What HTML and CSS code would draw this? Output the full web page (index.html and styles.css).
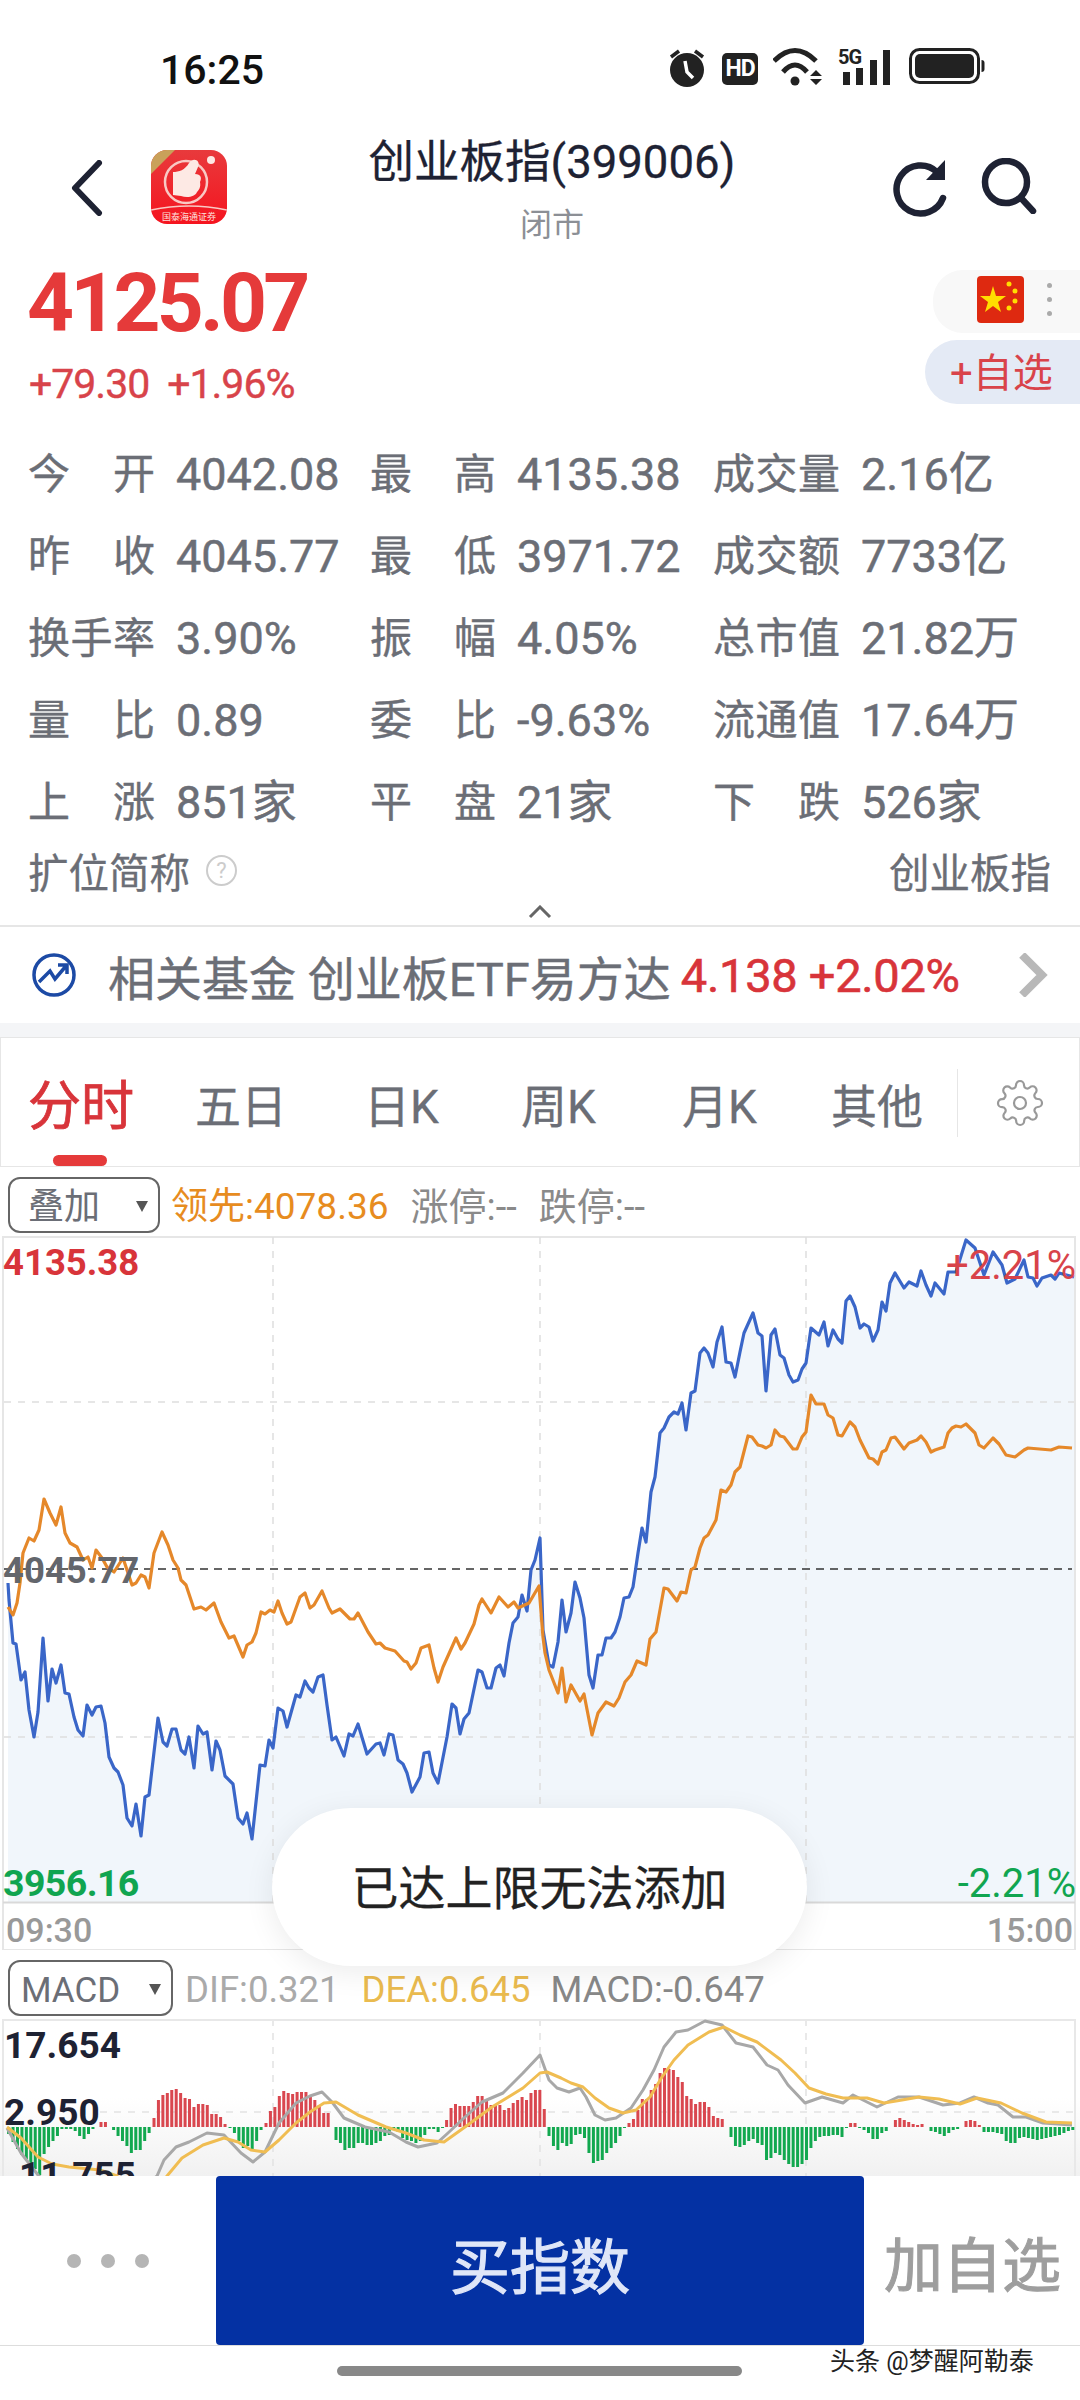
FILE: index.html
```html
<!doctype html>
<html lang="zh-CN">
  <head>
    <meta charset="UTF-8" />
    <meta name="viewport" content="width=device-width, initial-scale=1" />
    <title>创业板指(399006)</title>
    <link rel="stylesheet" href="styles.css">
  </head>
  <body>
    <div class="c-page">
      <div class="c-status">
        <span class="c-status__time">16:25</span>
        <div class="c-status__icons">
          <svg width="38" height="40" viewBox="0 0 38 40"><circle cx="18" cy="22" r="17" fill="#222"/><path d="M16 13 L18 24 L24 30" fill="none" stroke="#fff" stroke-width="3.5"/><path d="M2 9 L10 3 M34 9 L26 3" stroke="#222" stroke-width="3.5"/></svg>
          <span class="c-status__hd">HD</span>
          <svg width="50" height="38" viewBox="0 0 50 38"><g fill="none" stroke="#222" stroke-width="5"><path d="M1 13 Q22 -8 43 13"/><path d="M10 24 Q22 10 34 24"/></g><circle cx="22" cy="33" r="4.500" fill="#222"/><path d="M43 22 L49 28 H37Z M37 31 H49 L43 37Z" fill="#222"/></svg>
          <div class="c-status__signal">
            <span class="c-status__5g">5G</span>
            <svg width="54" height="38" viewBox="0 0 54 38"><path d="M6 24H13V37H6Z M19 20H26V37H19Z M33 12H40V37H33Z M46 2H53V37H46Z" fill="#222"/></svg>
          </div>
          <svg width="76" height="36" viewBox="0 0 76 36"><rect x="1.5" y="1.5" width="68" height="33" rx="9" fill="none" stroke="#222" stroke-width="3"/><rect x="6" y="6" width="59" height="24" rx="5" fill="#222"/><path d="M72.500 12 a3 3 0 0 1 3 3 v6 a3 3 0 0 1 -3 3z" fill="#222"/></svg>
        </div>
      </div>

      <header class="c-header">
        <svg class="c-header__back" width="34" height="56" viewBox="0 0 34 56"><path d="M29 3 L5 28 L29 53" fill="none" stroke="#1e2233" stroke-width="6" stroke-linecap="round" stroke-linejoin="round"/></svg>
        <svg class="c-header__app" width="76" height="74" viewBox="0 0 76 74">
          <defs>
            <linearGradient id="appRed" x1="0" y1="0" x2="0" y2="1"><stop offset="0" stop-color="#e83a3c"/><stop offset="1" stop-color="#f5141f"/></linearGradient>
            <clipPath id="appClip"><rect width="76" height="74" rx="16"/></clipPath>
          </defs>
          <g clip-path="url(#appClip)">
            <rect width="76" height="74" fill="url(#appRed)"/>
            <path d="M0 0 H24 L0 24Z" fill="#c9a15a"/>
            <circle cx="35" cy="32" r="21" fill="none" stroke="#f9c9c4" stroke-width="2.500"/>
            <path d="M22 22 C28 22 34 20 38 13 C42 7 50 10 47 17 L44 24 C50 24 51 28 49 32 C50 37 48 40 46 42 C44 47 36 48 30 46 L22 45Z" fill="#fde9e4"/>
            <circle cx="60" cy="10" r="4" fill="#fde9e4"/>
            <path d="M0 60 Q38 52 76 60" fill="none" stroke="#f9c9c4" stroke-width="1.500"/>
            <text x="38" y="70" text-anchor="middle" font-size="9" fill="#fde0dc" font-family="'Noto Sans CJK SC'">国泰海通证券</text>
          </g>
        </svg>
        <div class="c-header__title">
          <h1>创业板指(399006)</h1>
          <p>闭市</p>
        </div>
        <div class="c-header__tools">
          <svg width="58" height="60" viewBox="0 0 58 60"><path d="M46 14 A24 24 0 1 0 52 40" fill="none" stroke="#1e2233" stroke-width="6.500" stroke-linecap="round"/><path d="M54 2 V22 H35Z" fill="#1e2233"/></svg>
          <svg width="58" height="56" viewBox="0 0 58 56"><circle cx="27" cy="24" r="21" fill="none" stroke="#1e2233" stroke-width="6.500"/><path d="M42 40 L54 53" stroke="#1e2233" stroke-width="6.500" stroke-linecap="round"/></svg>
        </div>
      </header>

      <section class="c-quote">
        <div class="c-quote__price">
          <div class="c-quote__last">4125.07</div>
          <div class="c-quote__change"><span>+79.30</span><span>+1.96%</span></div>
        </div>
        <div class="c-quote__side">
          <div class="c-quote__region">
            <svg width="47" height="47" viewBox="0 0 47 47"><rect width="47" height="47" rx="4" fill="#de2910"/><path d="M16 10 L19 20 L29 20 L21 26 L24 36 L16 30 L8 36 L11 26 L3 20 L13 20Z" fill="#ffde00"/><circle cx="32" cy="8" r="2.500" fill="#ffde00"/><circle cx="38" cy="15" r="2.500" fill="#ffde00"/><circle cx="38" cy="25" r="2.500" fill="#ffde00"/><circle cx="32" cy="32" r="2.500" fill="#ffde00"/></svg>
            <div class="c-quote__dots"><i></i><i></i><i></i></div>
          </div>
          <div class="c-quote__add">+自选</div>
        </div>
      </section>

      <section class="c-stats">
        <span class="c-stats__k">今开</span><span class="c-stats__v">4042.08</span>
        <span class="c-stats__k">最高</span><span class="c-stats__v">4135.38</span>
        <span class="c-stats__k">成交量</span><span class="c-stats__v">2.16亿</span>
        <span class="c-stats__k">昨收</span><span class="c-stats__v">4045.77</span>
        <span class="c-stats__k">最低</span><span class="c-stats__v">3971.72</span>
        <span class="c-stats__k">成交额</span><span class="c-stats__v">7733亿</span>
        <span class="c-stats__k">换手率</span><span class="c-stats__v">3.90%</span>
        <span class="c-stats__k">振幅</span><span class="c-stats__v">4.05%</span>
        <span class="c-stats__k">总市值</span><span class="c-stats__v">21.82万</span>
        <span class="c-stats__k">量比</span><span class="c-stats__v">0.89</span>
        <span class="c-stats__k">委比</span><span class="c-stats__v">-9.63%</span>
        <span class="c-stats__k">流通值</span><span class="c-stats__v">17.64万</span>
        <span class="c-stats__k">上涨</span><span class="c-stats__v">851家</span>
        <span class="c-stats__k">平盘</span><span class="c-stats__v">21家</span>
        <span class="c-stats__k">下跌</span><span class="c-stats__v">526家</span>
      </section>

      <div class="c-alias">
        <div class="c-alias__name">扩位简称<span class="c-alias__help">?</span></div>
        <div>创业板指</div>
      </div>
      <div class="c-fold">
        <svg width="24" height="14" viewBox="0 0 24 14"><path d="M2 12 L12 2 L22 12" fill="none" stroke="#666" stroke-width="3"/></svg>
      </div>

      <a class="c-fund">
        <svg width="48" height="46" viewBox="0 0 48 46"><circle cx="24" cy="23" r="20" fill="none" stroke="#1c4aa5" stroke-width="3.500"/><path d="M9 30 L20 19 L25 27 L36 14 M28 13 H37 V22" fill="none" stroke="#1c4aa5" stroke-width="3.500"/></svg>
        <span class="c-fund__name">相关基金 创业板ETF易方达</span>
        <span class="c-fund__val">4.138 +2.02%</span>
        <svg class="c-fund__more" width="30" height="44" viewBox="0 0 30 44"><path d="M4 2 L24 22 L4 42" fill="none" stroke="#b8b8b8" stroke-width="8"/></svg>
      </a>
      <div class="c-band"></div>

      <nav class="c-tabs">
        <span class="c-tabs__item is-active">分时</span>
        <span class="c-tabs__item">五日</span>
        <span class="c-tabs__item">日K</span>
        <span class="c-tabs__item">周K</span>
        <span class="c-tabs__item">月K</span>
        <span class="c-tabs__item">其他</span>
        <span class="c-tabs__gear">
          <svg width="48" height="48" viewBox="0 0 24 24" fill="none" stroke="#999" stroke-width="1.100"><circle cx="12" cy="12" r="3"/><path d="M19.400 15a1.650 1.650 0 0 0 .33 1.820l.06.06a2 2 0 0 1 0 2.830 2 2 0 0 1-2.830 0l-.06-.06a1.650 1.650 0 0 0-1.820-.33 1.650 1.650 0 0 0-1 1.510V21a2 2 0 0 1-2 2 2 2 0 0 1-2-2v-.09A1.650 1.650 0 0 0 9 19.400a1.650 1.650 0 0 0-1.820.33l-.06.06a2 2 0 0 1-2.830 0 2 2 0 0 1 0-2.830l.06-.06a1.650 1.650 0 0 0 .33-1.820 1.650 1.650 0 0 0-1.510-1H3a2 2 0 0 1-2-2 2 2 0 0 1 2-2h.09A1.650 1.650 0 0 0 4.600 9a1.650 1.650 0 0 0-.33-1.820l-.06-.06a2 2 0 0 1 0-2.830 2 2 0 0 1 2.830 0l.06.06a1.650 1.650 0 0 0 1.820.33H9a1.650 1.650 0 0 0 1-1.510V3a2 2 0 0 1 2-2 2 2 0 0 1 2 2v.09a1.650 1.650 0 0 0 1 1.510 1.650 1.650 0 0 0 1.820-.33l.06-.06a2 2 0 0 1 2.830 0 2 2 0 0 1 0 2.830l-.06.06a1.650 1.650 0 0 0-.33 1.820V9a1.650 1.650 0 0 0 1.510 1H21a2 2 0 0 1 2 2 2 2 0 0 1-2 2h-.09a1.650 1.650 0 0 0-1.510 1z"/></svg>
        </span>
      </nav>

      <div class="c-legend">
        <div class="c-select c-select--overlay">叠加<i></i></div>
        <span class="c-legend__lead">领先:4078.36</span>
        <span class="c-legend__mute">涨停:--</span>
        <span class="c-legend__mute">跌停:--</span>
      </div>

      <div class="c-chart">
        <svg class="c-chart__svg" width="1080" height="714" viewBox="0 1236 1080 714">
          <path d="M8 1902 L8 1583 9 1600 13 1643 16 1644 21 1680 25 1672 29 1710 34 1737 38 1712 43 1638 48 1701 52 1669 56 1683 61 1665 65 1693 69 1694 74 1717 78 1730 83 1736 87 1705 92 1715 96 1707 101 1706 105 1723 109 1757 114 1768 118 1772 123 1785 127 1818 132 1826 136 1804 141 1836 145 1797 149 1795 158 1718 163 1742 167 1746 172 1729 176 1729 181 1750 185 1754 189 1737 194 1768 198 1726 203 1734 207 1732 212 1770 216 1741 220 1750 225 1776 233 1784 238 1818 243 1824 247 1813 252 1839 260 1765 265 1766 269 1740 273 1748 278 1708 283 1711 287 1727 296 1695 300 1697 305 1681 309 1688 313 1692 318 1677 323 1675 327 1705 332 1740 336 1737 344 1756 349 1734 353 1736 358 1724 367 1754 376 1744 380 1743 384 1755 389 1734 393 1735 398 1760 403 1764 407 1773 412 1792 420 1777 424 1753 429 1752 433 1773 438 1783 447 1737 452 1704 456 1708 460 1734 464 1719 469 1713 478 1670 482 1672 487 1688 491 1688 496 1668 500 1665 504 1676 509 1643 513 1623 518 1617 522 1595 527 1611 531 1570 535 1560 540 1538 543 1630 549 1665 553 1667 558 1642 562 1600 566 1632 571 1613 575 1582 580 1598 584 1618 589 1675 593 1688 598 1655 602 1655 606 1638 611 1638 615 1632 620 1617 624 1598 629 1597 633 1587 638 1553 642 1528 646 1542 651 1492 655 1477 660 1433 664 1428 669 1417 674 1412 678 1414 682 1403 686 1430 691 1393 695 1391 700 1353 704 1348 708 1353 713 1367 717 1342 722 1327 726 1362 731 1363 735 1377 740 1352 744 1333 753 1313 758 1333 762 1336 766 1391 771 1335 775 1329 780 1355 784 1358 789 1375 793 1382 798 1380 802 1369 806 1363 811 1328 819 1335 824 1322 828 1346 833 1330 838 1339 842 1343 846 1301 850 1296 855 1307 860 1328 864 1324 869 1327 873 1341 878 1330 882 1302 886 1311 890 1283 895 1273 904 1288 909 1282 917 1286 921 1271 926 1285 931 1296 935 1283 944 1294 948 1272 956 1272 966 1240 975 1248 984 1275 993 1252 1002 1265 1007 1283 1015 1279 1024 1260 1028 1277 1033 1278 1037 1286 1042 1278 1051 1275 1055 1279 1059 1273 1074 1277 L1074 1902Z" fill="#f1f6fb"/>
          <path d="M3 1950 V1237 H1075 V1950 H3Z" fill="none" stroke="#e6e6e6" stroke-width="2"/>
          <path d="M3 1902.500 H1075" stroke="#d9d9d9" stroke-width="2"/>
          <path d="M273 1237 V1902 M540 1237 V1902 M806 1237 V1902 M4 1402 H1074 M4 1737 H1074" stroke="#dedede" stroke-width="1.500" stroke-dasharray="7 7"/>
          <path d="M4 1569 H1072" stroke="#333" stroke-width="1.500" stroke-dasharray="8 6"/>
          <polyline points="8,1583 9,1600 13,1643 16,1644 21,1680 25,1672 29,1710 34,1737 38,1712 43,1638 48,1701 52,1669 56,1683 61,1665 65,1693 69,1694 74,1717 78,1730 83,1736 87,1705 92,1715 96,1707 101,1706 105,1723 109,1757 114,1768 118,1772 123,1785 127,1818 132,1826 136,1804 141,1836 145,1797 149,1795 158,1718 163,1742 167,1746 172,1729 176,1729 181,1750 185,1754 189,1737 194,1768 198,1726 203,1734 207,1732 212,1770 216,1741 220,1750 225,1776 233,1784 238,1818 243,1824 247,1813 252,1839 260,1765 265,1766 269,1740 273,1748 278,1708 283,1711 287,1727 296,1695 300,1697 305,1681 309,1688 313,1692 318,1677 323,1675 327,1705 332,1740 336,1737 344,1756 349,1734 353,1736 358,1724 367,1754 376,1744 380,1743 384,1755 389,1734 393,1735 398,1760 403,1764 407,1773 412,1792 420,1777 424,1753 429,1752 433,1773 438,1783 447,1737 452,1704 456,1708 460,1734 464,1719 469,1713 478,1670 482,1672 487,1688 491,1688 496,1668 500,1665 504,1676 509,1643 513,1623 518,1617 522,1595 527,1611 531,1570 535,1560 540,1538 543,1630 549,1665 553,1667 558,1642 562,1600 566,1632 571,1613 575,1582 580,1598 584,1618 589,1675 593,1688 598,1655 602,1655 606,1638 611,1638 615,1632 620,1617 624,1598 629,1597 633,1587 638,1553 642,1528 646,1542 651,1492 655,1477 660,1433 664,1428 669,1417 674,1412 678,1414 682,1403 686,1430 691,1393 695,1391 700,1353 704,1348 708,1353 713,1367 717,1342 722,1327 726,1362 731,1363 735,1377 740,1352 744,1333 753,1313 758,1333 762,1336 766,1391 771,1335 775,1329 780,1355 784,1358 789,1375 793,1382 798,1380 802,1369 806,1363 811,1328 819,1335 824,1322 828,1346 833,1330 838,1339 842,1343 846,1301 850,1296 855,1307 860,1328 864,1324 869,1327 873,1341 878,1330 882,1302 886,1311 890,1283 895,1273 904,1288 909,1282 917,1286 921,1271 926,1285 931,1296 935,1283 944,1294 948,1272 956,1272 966,1240 975,1248 984,1275 993,1252 1002,1265 1007,1283 1015,1279 1024,1260 1028,1277 1033,1278 1037,1286 1042,1278 1051,1275 1055,1279 1059,1273 1074,1277" fill="none" stroke="#3a66c8" stroke-width="3.200" stroke-linejoin="round"/>
          <polyline points="8,1607 13,1615 17,1603 20,1583 23,1553 29,1538 34,1541 39,1530 44,1499 50,1513 56,1525 61,1507 65,1533 70,1543 77,1547 83,1560 88,1557 92,1568 96,1550 102,1558 107,1567 114,1572 123,1558 128,1573 132,1585 136,1583 141,1575 145,1577 149,1588 154,1553 162,1532 168,1545 173,1560 178,1568 181,1580 186,1585 194,1609 201,1607 206,1610 214,1603 221,1622 229,1638 234,1636 243,1657 247,1645 252,1642 256,1633 261,1612 265,1614 270,1610 274,1612 278,1601 282,1613 287,1624 291,1622 300,1597 305,1593 310,1608 314,1605 322,1591 329,1608 332,1613 340,1609 350,1619 354,1619 358,1613 368,1632 376,1644 380,1643 385,1648 395,1651 404,1661 407,1662 411,1669 416,1663 421,1648 429,1645 434,1668 438,1682 443,1667 456,1638 461,1649 465,1643 474,1624 479,1605 482,1599 491,1613 499,1597 508,1607 514,1602 518,1608 529,1603 539,1586 543,1637 545,1653 549,1670 558,1693 562,1668 566,1702 571,1685 580,1701 584,1694 592,1735 598,1713 606,1702 614,1706 619,1698 625,1682 631,1675 637,1661 646,1665 650,1639 656,1632 660,1610 664,1588 668,1589 677,1601 681,1592 686,1593 691,1570 695,1567 700,1548 704,1538 708,1535 716,1520 721,1490 726,1492 731,1485 735,1472 740,1467 748,1436 752,1437 758,1445 762,1446 766,1448 771,1445 775,1430 780,1436 784,1437 793,1449 797,1449 802,1437 806,1432 811,1395 816,1404 824,1404 828,1415 833,1418 838,1435 842,1436 850,1422 855,1427 860,1440 869,1458 873,1459 878,1464 882,1452 886,1450 891,1438 895,1437 904,1449 909,1443 917,1440 921,1436 926,1442 931,1452 935,1450 944,1447 948,1433 952,1428 956,1426 961,1427 966,1424 975,1433 979,1445 984,1448 993,1438 999,1444 1006,1455 1015,1457 1024,1450 1028,1448 1051,1450 1059,1447 1072,1448" fill="none" stroke="#e5882a" stroke-width="3.200" stroke-linejoin="round"/>
        </svg>
        <span class="c-chart__label c-chart__label--high">4135.38</span>
        <span class="c-chart__label c-chart__label--prev">4045.77</span>
        <span class="c-chart__label c-chart__label--low">3956.16</span>
        <span class="c-chart__label c-chart__label--up">+2.21%</span>
        <span class="c-chart__label c-chart__label--down">-2.21%</span>
        <span class="c-chart__label c-chart__label--start">09:30</span>
        <span class="c-chart__label c-chart__label--end">15:00</span>
      </div>

      <div class="c-legend c-legend--macd">
        <div class="c-select c-select--macd">MACD<i></i></div>
        <span class="c-legend__dif">DIF:0.321</span>
        <span class="c-legend__dea">DEA:0.645</span>
        <span class="c-legend__macd">MACD:-0.647</span>
      </div>

      <div class="c-macd">
        <svg class="c-chart__svg" width="1080" height="157" viewBox="0 2019 1080 157">
          <path d="M273 2019 V2176 M540 2019 V2176 M806 2019 V2176 M100 2112 H1074" stroke="#e2e2e2" stroke-width="1.500" stroke-dasharray="7 7"/>
          <path d="M3 2176 V2020 H1075 V2176" fill="none" stroke="#e8e8e8" stroke-width="2"/>
          <path fill="none" stroke="#12a84f" stroke-width="3" d="
            M8.600 2127 v7m4.440-7v15m4.440-15v22m4.440-22v28m4.440-28v32m4.440-32v37m4.440-37v42m4.440-42v48m4.440-48v27m4.440-27v20m4.440-20v14m4.440-14v9m4.440-9v2m4.440-2v2m4.440-2v2m4.440-2v4m4.440-4v9m4.440-9v12m4.440-12v7m4.440-7v2
            M113.600 2127 v3m4.440-3v9m4.440-9v14m4.440-14v19m4.440-19v26m4.440-26v23m4.440-23v23m4.440-23v14m4.440-14v6
            M230 2127 v1m4.440-1v6m4.440-6v14m4.440-14v21m4.440-21v19m4.440-19v23m4.440-23v14m4.440-14v3
            M336 2127 v13m4.440-13v16m4.440-16v23m4.440-23v21m4.440-21v21m4.440-21v16m4.440-16v16m4.440-16v18m4.440-18v18m4.440-18v16m4.440-16v14m4.440-14v9m4.440-9v8m4.440-8v3m4.440-3v5m4.440-5v11m4.440-11v13m4.440-13v14m4.440-14v16m4.440-16v14m4.440-14v8m4.440-8v2m4.440-2v2m4.440-2v5m4.440-5v1
            M549 2127 v9m4.440-9v19m4.440-19v23m4.440-23v16m4.440-16v19m4.440-19v17m4.440-17v8m4.440-8v7m4.440-7v11m4.440-11v26m4.440-26v36m4.440-36v34m4.440-34v33m4.440-33v26m4.440-26v21m4.440-21v16m4.440-16v9m4.440-9v1
            M731 2127 v10m4.440-10v19m4.440-19v20m4.440-20v18m4.440-18v14m4.440-14v12m4.440-12v16m4.440-16v18m4.440-18v33m4.440-33v31m4.440-31v26m4.440-26v28m4.440-28v33m4.440-33v37m4.440-37v40m4.440-40v40m4.440-40v37m4.440-37v33m4.440-33v21m4.440-21v14m4.440-14v10m4.440-10v9m4.440-9v9m4.440-9v8m4.440-8v8m4.440-8v10m4.440-10v1
            M859.600 2127 v1m4.440-1v3m4.440-3v6m4.440-6v12m4.440-12v12m4.440-12v6m4.440-6v4
            M931 2127 v4m4.440-4v5m4.440-5v7m4.440-7v9m4.440-9v6m4.440-6v3m4.440-3v2
            M984 2127 v5m4.440-5v5m4.440-5v5m4.440-5v6m4.440-6v7m4.440-7v14m4.440-14v16m4.440-16v16m4.440-16v11m4.440-11v10m4.440-10v11m4.440-11v12m4.440-12v13m4.440-13v12m4.440-12v11m4.440-11v10m4.440-10v9m4.440-9v8m4.440-8v6m4.440-6v4m4.440-4v3"/>
          <path fill="none" stroke="#d9474f" stroke-width="3" d="
            M101 2127 v-5m4.440 5v-5
            M154 2127 v-9m4.440 9v-27m4.440 27v-32m4.440 32v-34m4.440 34v-37m4.440 37v-38m4.440 38v-34m4.440 34v-29m4.440 29v-28m4.440 28v-20m4.440 20v-23m4.440 23v-23m4.440 23v-22m4.440 22v-13m4.440 13v-13m4.440 13v-10m4.440 10v-3
            M266 2127 v-4m4.440 4v-16m4.440 16v-20m4.440 20v-31m4.440 31v-36m4.440 36v-34m4.440 34v-33m4.440 33v-35m4.440 35v-35m4.440 35v-35m4.440 35v-30m4.440 30v-27m4.440 27v-22m4.440 22v-14m4.440 14v-14
            M446.600 2127 v-7m4.440 7v-19m4.440 19v-23m4.440 23v-21m4.440 21v-21m4.440 21v-21m4.440 21v-25m4.440 25v-31m4.440 31v-31m4.440 31v-27m4.440 27v-22m4.440 22v-22m4.440 22v-22m4.440 22v-17m4.440 17v-19m4.440 19v-24m4.440 24v-27m4.440 27v-30m4.440 30v-27m4.440 27v-34m4.440 34v-37m4.440 37v-37m4.440 37v-18
            M629 2127 v-4m4.440 4v-8m4.440 8v-17m4.440 17v-28m4.440 28v-28m4.440 28v-37m4.440 37v-43m4.440 43v-54m4.440 54v-59m4.440 59v-58m4.440 58v-57m4.440 57v-50m4.440 50v-45m4.440 45v-31m4.440 31v-28m4.440 28v-23m4.440 23v-25m4.440 25v-25m4.440 25v-20m4.440 20v-11m4.440 11v-9m4.440 9v-8
            M850.600 2127 v-4m4.440 4v-4
            M895.400 2127 v-7m4.440 7v-9m4.440 9v-7m4.440 7v-5m4.440 5v-3m4.440 3v-2m4.440 2v-3
            M966 2127 v-6m4.440 6v-7m4.440 7v-6m4.440 6v-2"/>
          <polyline fill="none" stroke="#a8a8a8" stroke-width="3" stroke-linejoin="round" points="7,2128 21,2153 38,2175 48,2185 140,2190 157,2176 164,2160 176,2147 189,2142 207,2133 224,2135 241,2153 253,2162 265,2152 279,2123 296,2103 310,2096 322,2092 332,2102 344,2118 365,2127 389,2132 406,2142 418,2147 437,2143 448,2133 465,2117 482,2102 503,2093 523,2073 540,2055 549,2080 557,2088 569,2092 580,2088 586,2097 595,2115 605,2120 616,2118 631,2108 643,2090 654,2070 664,2047 676,2032 688,2030 705,2021 722,2025 736,2043 753,2047 767,2065 778,2070 788,2085 805,2103 822,2097 843,2103 853,2095 877,2107 898,2097 919,2097 943,2105 960,2103 974,2097 988,2103 998,2105 1013,2117 1026,2117 1043,2123 1072,2125"/>
          <polyline fill="none" stroke="#f0bd52" stroke-width="3" stroke-linejoin="round" points="7,2127 21,2138 38,2157 52,2164 69,2167 100,2170 117,2176 125,2185 160,2185 167,2176 182,2158 203,2145 224,2138 238,2142 251,2150 265,2152 279,2140 296,2123 310,2112 324,2103 336,2102 358,2115 386,2127 406,2133 424,2140 444,2142 465,2127 492,2107 523,2088 540,2073 547,2072 561,2078 571,2083 583,2087 595,2098 609,2108 623,2113 636,2110 650,2097 662,2077 674,2060 688,2045 709,2032 724,2027 740,2035 757,2042 781,2060 795,2073 809,2088 826,2094 843,2098 867,2098 884,2103 902,2100 919,2097 939,2099 960,2104 977,2098 1001,2103 1022,2113 1046,2122 1072,2123"/>
        </svg>
        <span class="c-macd__label c-macd__label--max">17.654</span>
        <span class="c-macd__label c-macd__label--mid">2.950</span>
        <span class="c-macd__label c-macd__label--min">11.755</span>
      </div>

      <footer class="c-footer">
        <div class="c-footer__bar">
          <div class="c-footer__dots"><i></i><i></i><i></i></div>
          <div class="c-footer__buy">买指数</div>
          <div class="c-footer__add">加自选</div>
        </div>
        <div class="c-footer__home"></div>
        <span class="c-footer__mark">头条 @梦醒阿勒泰</span>
      </footer>

      <div class="c-toast">已达上限无法添加</div>
    </div>
  </body>
</html>
```

FILE: styles.css
```css
* {
  box-sizing: border-box;
}

html,
body {
  margin: 0;
  padding: 0;
}

body {
  font-family: Roboto, 'Noto Sans CJK SC', sans-serif;
  color: #6b6e76;
  background: #fff;
}

.c-page {
  position: relative;
  width: 1080px;
  height: 2400px;
  overflow: hidden;
}

/* status bar */
.c-status {
  height: 130px;
  padding: 48px 95px 0 160px;
  display: flex;
  justify-content: space-between;
  align-items: flex-start;
}

.c-status__time {
  font-size: 41px;
  line-height: 44px;
  font-weight: 500;
  color: #111;
}

.c-status__icons {
  display: flex;
  gap: 15px;
  align-items: flex-start;
}

.c-status__hd {
  width: 36px;
  height: 32px;
  margin-top: 5px;
  border-radius: 5px;
  background: #222;
  color: #fff;
  font-size: 23px;
  font-weight: 700;
  line-height: 32px;
  text-align: center;
  letter-spacing: -1px;
}

.c-status__signal {
  position: relative;
  width: 54px;
  margin: 0 3px 0 -1px;
}

.c-status__5g {
  position: absolute;
  top: -3px;
  left: 1px;
  font-size: 20px;
  font-weight: 700;
  line-height: 24px;
  color: #222;
  letter-spacing: -1px;
}

/* header */
.c-header {
  height: 120px;
  position: relative;
  display: flex;
  align-items: flex-start;
  padding: 28px 43px 0 70px;
}

.c-header__back {
  margin-top: 2px;
}

.c-header__app {
  margin: -8px 0 0 47px;
}

.c-header__title {
  position: absolute;
  top: 8px;
  left: 0;
  width: 1104px;
  text-align: center;
}

.c-header__title h1 {
  margin: 0;
  font-size: 45.500px;
  line-height: 50px;
  font-weight: 400;
  color: #1e2233;
  -webkit-text-stroke: .3px #1e2233;
}

.c-header__title p {
  margin: 18px 0 0;
  font-size: 32px;
  line-height: 38px;
  color: #8c8f95;
}

.c-header__tools {
  margin-left: auto;
  display: flex;
  gap: 30px;
}

/* price */
.c-quote {
  height: 184px;
  display: flex;
  justify-content: space-between;
  padding-left: 27px;
}

.c-quote__last {
  font-size: 82px;
  line-height: 90px;
  font-weight: 700;
  letter-spacing: -3.800px;
  color: #e53a3a;
  margin-top: 8px;
}

.c-quote__change {
  display: flex;
  gap: 18px;
  margin: 13px 0 0 2px;
  font-size: 41px;
  line-height: 46px;
  letter-spacing: -1px;
  color: #d8434a;
  -webkit-text-stroke: .4px #d8434a;
}

.c-quote__side {
  width: 155px;
  display: flex;
  flex-direction: column;
  align-items: flex-end;
  padding-top: 20px;
  gap: 7px;
}

.c-quote__region {
  width: 147px;
  height: 63px;
  padding: 6px 0 0 44px;
  border-radius: 30px 0 0 30px;
  background: #f8f8f8;
  display: flex;
  gap: 23px;
}

.c-quote__dots {
  display: grid;
  gap: 9px;
  padding-top: 7px;
  align-content: start;
}

.c-quote__dots i {
  width: 5px;
  height: 5px;
  border-radius: 50%;
  background: #aaa;
}

.c-quote__add {
  width: 155px;
  height: 64px;
  padding-left: 25px;
  border-radius: 32px 0 0 32px;
  background: #e4eaf5;
  color: #d9434a;
  font-size: 40px;
  line-height: 68px;
}

/* stats table */
.c-stats {
  padding-left: 28px;
  display: grid;
  grid-template-columns: 127px 215px 126px 217px 127px 1fr;
  grid-auto-rows: 82px;
  align-items: center;
  line-height: 50px;
}

.c-stats__k {
  font-size: 42px;
  text-align-last: justify;
  -webkit-text-stroke: .4px #6b6e76;
}

.c-stats__v {
  padding-left: 21px;
  font-size: 45px;
  -webkit-text-stroke: .5px #6b6e76;
}

.c-alias {
  height: 59px;
  padding: 0 29px 0 28px;
  display: flex;
  justify-content: space-between;
  align-items: center;
  font-size: 40.500px;
  line-height: 50px;
  -webkit-text-stroke: .3px #6b6e76;
}

.c-alias__name {
  display: flex;
  align-items: center;
}

.c-alias__help {
  width: 31px;
  height: 31px;
  margin: -6px 0 0 16px;
  border: 2px solid #ccc;
  border-radius: 50%;
  color: #ccc;
  font-size: 22px;
  line-height: 27px;
  text-align: center;
  -webkit-text-stroke: 0;
}

.c-fold {
  height: 24px;
  padding-top: 2px;
  border-bottom: 2px solid #e6e6e6;
  text-align: center;
  line-height: 0;
}

/* related fund */
.c-fund {
  height: 96px;
  padding: 0 32px 0 30px;
  display: flex;
  align-items: center;
  white-space: nowrap;
}

.c-fund__name {
  margin-left: 30px;
  font-size: 47px;
  -webkit-text-stroke: .4px #6b6e76;
}

.c-fund__val {
  margin-left: 10px;
  font-size: 47px;
  color: #d8343a;
  letter-spacing: -.3px;
  -webkit-text-stroke: .6px #d8343a;
}

.c-fund__more {
  margin-left: auto;
}

.c-band {
  height: 14px;
  background: #f4f5f7;
}

/* period tabs */
.c-tabs {
  height: 130px;
  padding: 24px 0 0 27px;
  border: 1px solid #e6e6e6;
  position: relative;
  display: grid;
  grid-template-columns: 167px 169px 157px 161px 149px 126px 1fr;
  align-items: start;
  font-size: 46px;
  line-height: 90px;
  -webkit-text-stroke: .3px #6b6e76;
}

.c-tabs__item.is-active {
  font-size: 53px;
  color: #d8343a;
  -webkit-text-stroke: .8px #d8343a;
}

.c-tabs__item.is-active::after {
  content: '';
  position: absolute;
  left: 52px;
  top: 117px;
  width: 54px;
  height: 11px;
  border-radius: 6px;
  background: #e53a3a;
}

.c-tabs__gear {
  height: 68px;
  margin-top: 7px;
  padding: 10px 0 0 38px;
  border-left: 1px solid #e6e6e6;
  line-height: 0;
}

/* overlay / indicator row */
.c-legend {
  height: 69px;
  padding: 10px 0 0 8px;
  display: flex;
  align-items: flex-start;
  font-size: 37px;
  line-height: 60px;
  white-space: nowrap;
}

.c-select {
  height: 56px;
  position: relative;
  border: 2px solid #666;
  border-radius: 12px;
  font-size: 36px;
  line-height: 57px;
}

.c-select i {
  position: absolute;
  top: 22px;
  border-left: 6px solid transparent;
  border-right: 6px solid transparent;
  border-top: 11px solid #555;
}

.c-select--overlay {
  width: 152px;
  padding-left: 18px;
}

.c-select--overlay i {
  left: 126px;
}

.c-select--macd {
  width: 165px;
  padding-left: 11px;
  font-size: 35px;
}

.c-select--macd i {
  left: 139px;
}

.c-legend__lead {
  margin-left: 11px;
  color: #e78c1f;
}

.c-legend__mute {
  margin-left: 22px;
  font-size: 38px;
  color: #8a8a8a;
}

.c-legend--macd {
  font-size: 36.500px;
}

.c-legend__dif {
  margin-left: 12px;
  color: #aaa;
}

.c-legend__dea {
  margin-left: 22px;
  color: #eabb4f;
}

.c-legend__macd {
  margin-left: 20px;
  color: #888;
}

/* charts */
.c-chart {
  height: 714px;
  position: relative;
}

.c-chart__svg {
  display: block;
}

.c-chart__label,
.c-macd__label {
  position: absolute;
  line-height: 40px;
  white-space: nowrap;
}

.c-chart__label--high {
  left: 3px;
  top: 7px;
  font-size: 36.500px;
  font-weight: 700;
  color: #d8343a;
}

.c-chart__label--prev {
  left: 3px;
  top: 315px;
  font-size: 36.500px;
  font-weight: 700;
  color: #63666c;
}

.c-chart__label--low {
  left: 3px;
  top: 627px;
  font-size: 37.500px;
  font-weight: 700;
  letter-spacing: -.6px;
  color: #10a550;
}

.c-chart__label--up {
  right: 4px;
  top: 10px;
  font-size: 40px;
  color: #d8434a;
}

.c-chart__label--down {
  right: 4px;
  top: 628px;
  font-size: 40px;
  color: #10a550;
}

.c-chart__label--start {
  left: 6px;
  top: 674px;
  font-size: 34px;
  font-weight: 500;
  color: #999;
}

.c-chart__label--end {
  right: 7px;
  top: 674px;
  font-size: 34px;
  font-weight: 500;
  color: #999;
}

.c-macd {
  height: 157px;
  position: relative;
  overflow: hidden;
  background: linear-gradient(#fff 50%, #f1f1f1);
}

.c-macd__label {
  font-size: 37px;
  font-weight: 700;
  color: #1e2233;
}

.c-macd__label--max {
  left: 4px;
  top: 7px;
}

.c-macd__label--mid {
  left: 4px;
  top: 74px;
}

.c-macd__label--min {
  left: 19px;
  top: 137px;
}

/* bottom action bar */
.c-footer {
  height: 224px;
  position: relative;
  background: #fff;
}

.c-footer__bar {
  height: 170px;
  border-bottom: 1px solid #ddd;
  display: grid;
  grid-template-columns: 216px 648px 1fr;
  grid-template-rows: 169px;
}

.c-footer__dots {
  padding: 78px 0 0 67px;
  display: flex;
  gap: 20px;
}

.c-footer__dots i {
  width: 14px;
  height: 14px;
  border-radius: 50%;
  background: #b5b5b5;
}

.c-footer__buy {
  padding-top: 18px;
  border-radius: 4px;
  background: #0431a3;
  color: #dfe6f8;
  font-size: 60px;
  line-height: 150px;
  text-align: center;
  -webkit-text-stroke: 1.200px #dfe6f8;
}

.c-footer__add {
  padding: 16px 0 0 20px;
  color: #9e9e9e;
  font-size: 59px;
  line-height: 150px;
  -webkit-text-stroke: 1px #9e9e9e;
}

.c-footer__home {
  width: 405px;
  height: 10px;
  margin: 20px 0 0 337px;
  border-radius: 5px;
  background: #888;
}

.c-footer__mark {
  position: absolute;
  left: 830px;
  top: 169px;
  font-size: 25px;
  line-height: 34px;
  color: #222;
  text-shadow: 0 0 2px #fff;
  white-space: nowrap;
}

/* toast */
.c-toast {
  position: absolute;
  left: 272px;
  top: 1808px;
  width: 535px;
  height: 158px;
  border-radius: 79px;
  background: #fff;
  box-shadow: 0 6px 30px rgba(0, 0, 0, .08);
  color: #222;
  font-size: 47px;
  line-height: 162px;
  text-align: center;
  -webkit-text-stroke: .3px #222;
}
```
